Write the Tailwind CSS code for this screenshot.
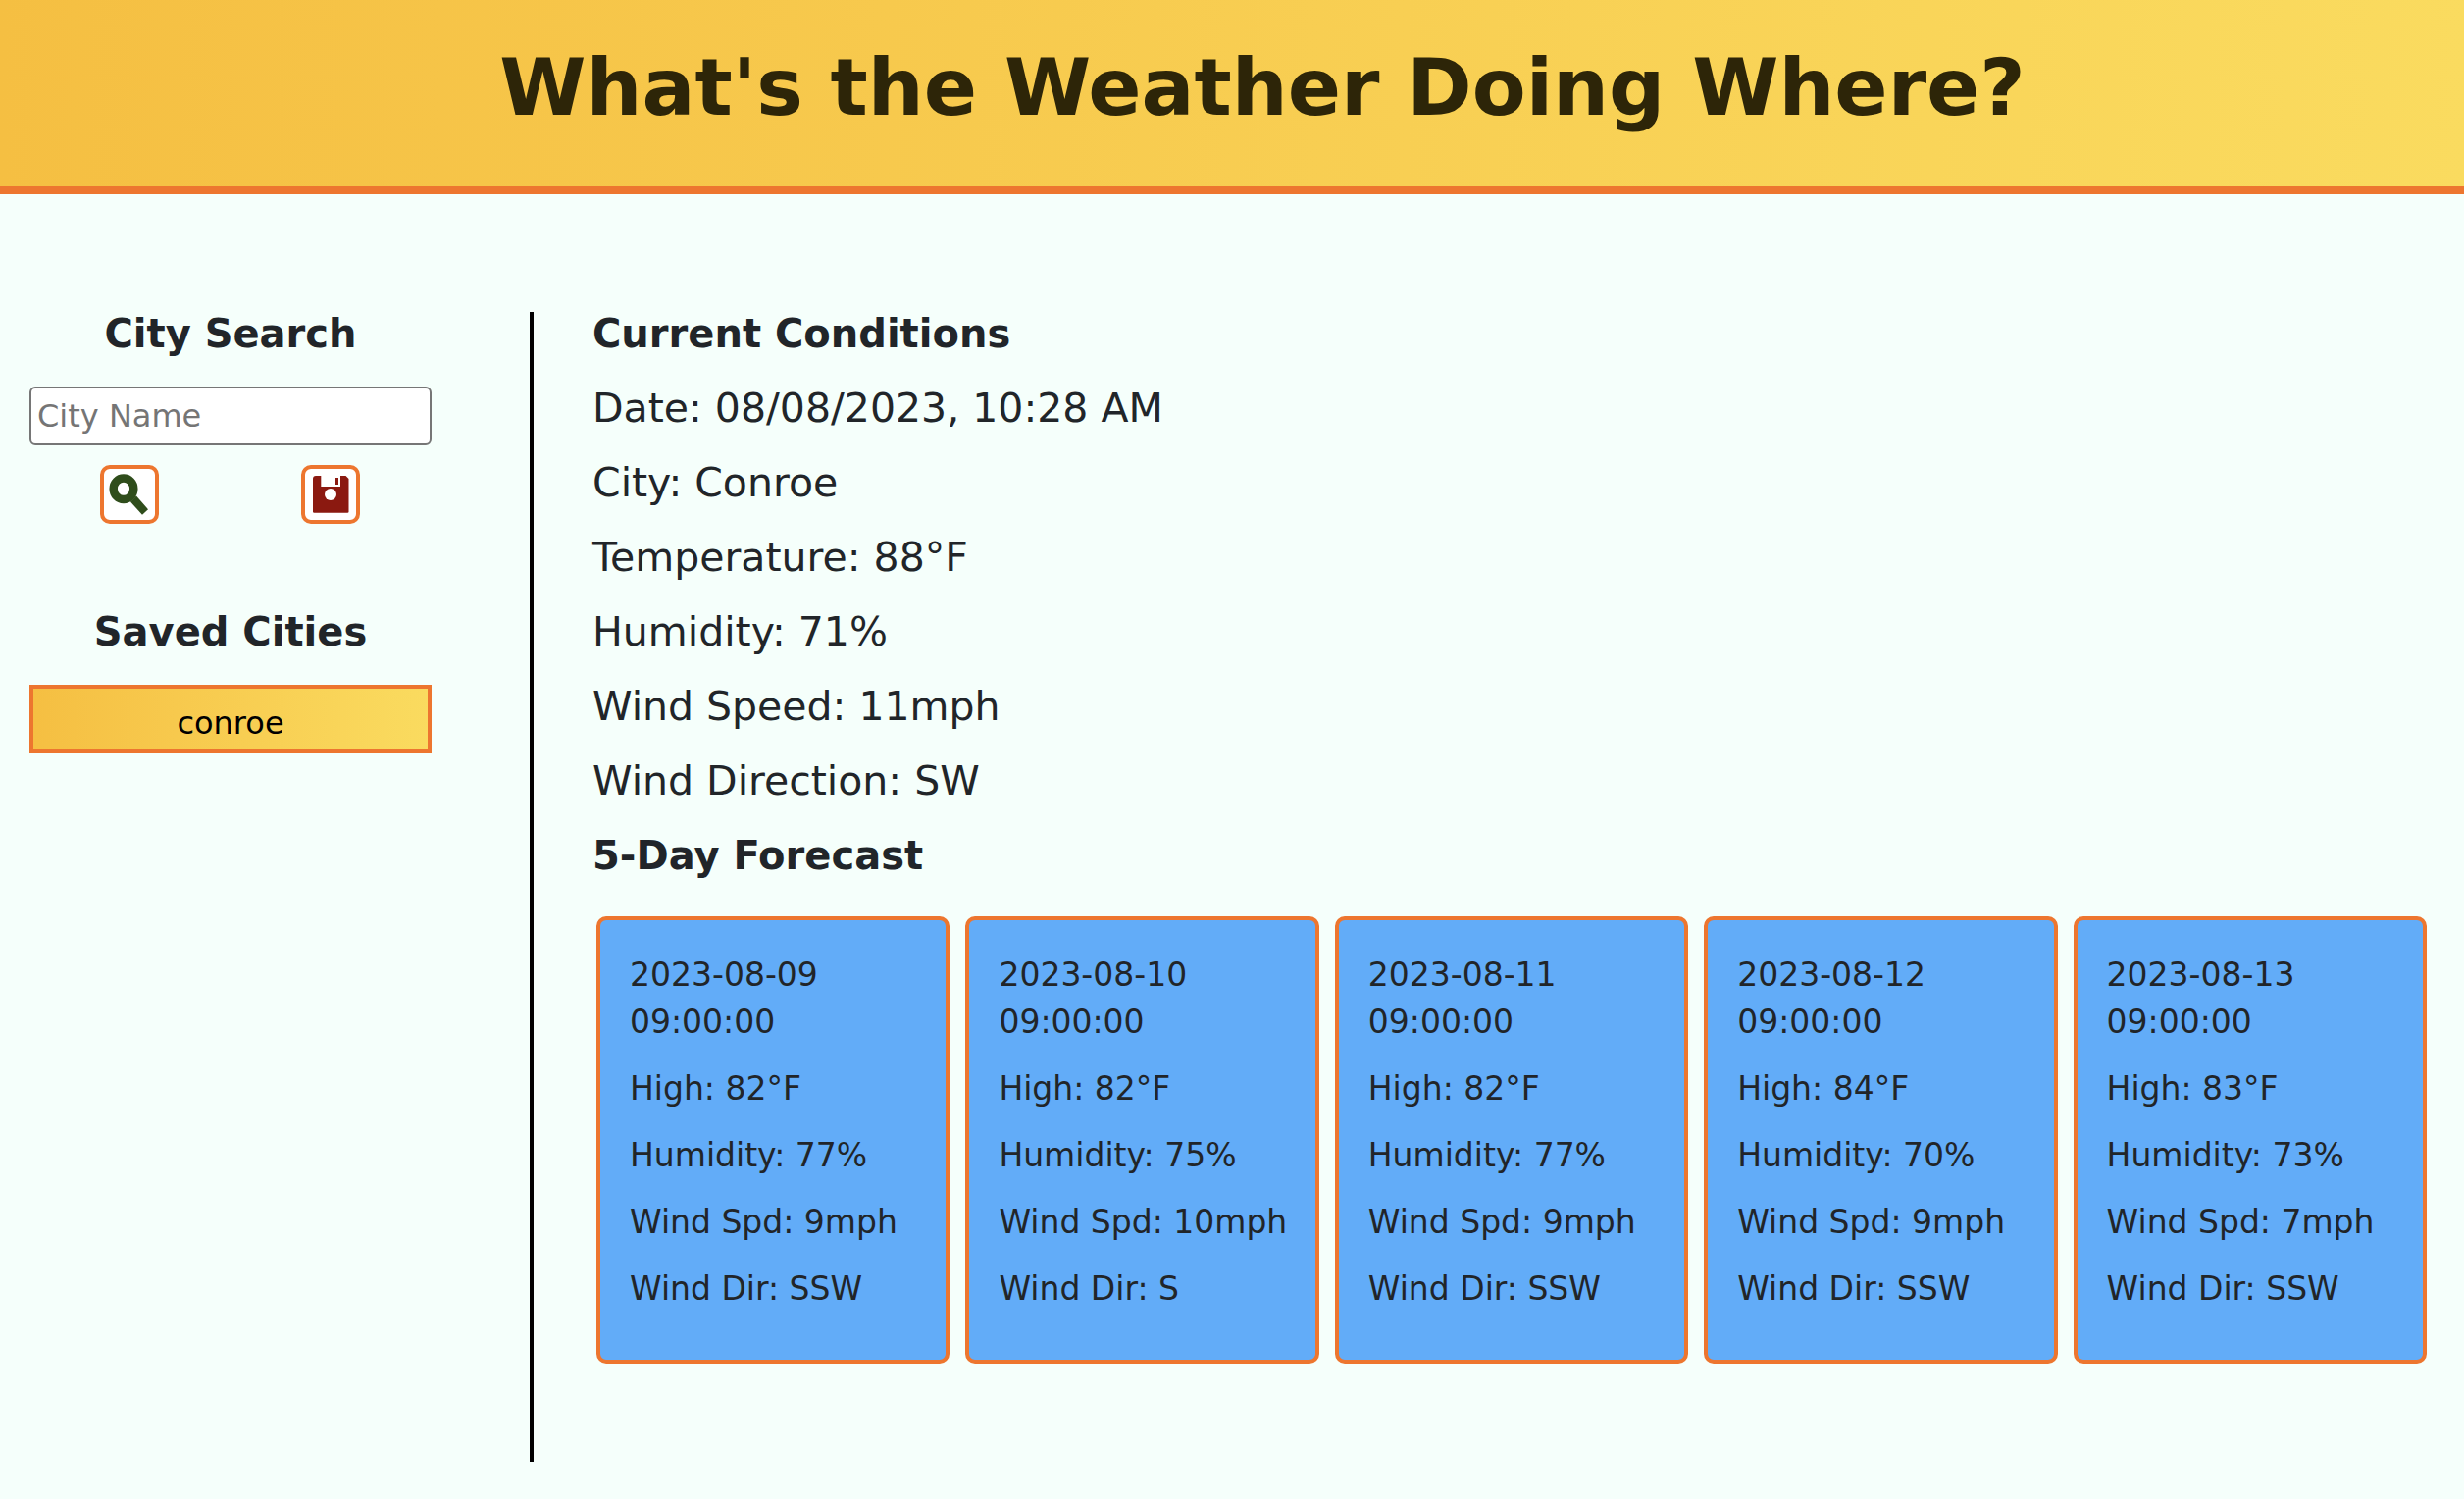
<!DOCTYPE html>
<html lang="en">
<head>
<meta charset="utf-8">
<meta name="viewport" content="width=device-width, initial-scale=1">
<title>What's the Weather Doing Where?</title>
<script src="https://cdn.jsdelivr.net/npm/@tailwindcss/browser@4"></script>
</head>
<body class="min-h-screen bg-[#f5fffb] font-['Verdana','DejaVu_Sans',sans-serif] text-[#212529]">
<header class="flex justify-center border-b-8 border-[#ed762f] bg-linear-to-r from-[#f5bf42] to-[#fadb5f] pt-[30px] pb-10 pl-[62px]">
  <h1 class="text-[80px] leading-[120px] font-bold text-[#2d2508]">What's the Weather Doing Where?</h1>
</header>
<main class="flex pt-[120px] pb-[38px]">
  <aside class="w-[544px] shrink-0 border-r-4 border-black pr-[100px] pl-[30px]">
    <form onsubmit="return false">
      <h2 class="-mt-2 text-center text-[40px] leading-[60px] font-bold"><label for="city">City Search</label></h2>
      <input id="city" type="text" placeholder="City Name" class="mt-6 block h-15 w-full rounded-md border-2 border-[#767676] bg-white px-1.5 text-[32px] placeholder:text-[#757575]">
      <div class="mt-5 flex justify-around pr-px">
        <button type="submit" aria-label="Search" class="size-15 rounded-[10px] border-4 border-[#ed762f] bg-white">
          <svg viewBox="0 0 52 52" class="size-full"><ellipse cx="20" cy="20.300" rx="10.300" ry="10.800" fill="none" stroke="#2f4d1b" stroke-width="8.500"/><path d="M27 33.500L33 27.500L45 41.300L39 46.700Z" fill="#2f4d1b"/></svg>
        </button>
        <button type="button" aria-label="Save city" class="size-15 rounded-[10px] border-4 border-[#ed762f] bg-white">
          <svg viewBox="0 0 52 52" class="size-full"><path d="M11 7H41.500L44.500 10V43.500Q44.500 44.700 43.300 44.700H9.200Q8 44.700 8 43.500V10Q8 7 11 7Z" fill="#8b1910"/><path d="M16.300 7H36V18H16.300Z" fill="#fff"/><path d="M31 9H34V16H31Z" fill="#8b1910"/><circle cx="26" cy="26" r="6" fill="#fff"/></svg>
        </button>
      </div>
    </form>
    <h2 class="mt-20 text-center text-[40px] leading-[60px] font-bold">Saved Cities</h2>
    <button type="button" class="mt-6 block h-[70px] w-full border-4 border-[#ed762f] bg-linear-to-r from-[#f5bf42] to-[#fadb5f] pt-2 text-[32px] text-black">conroe</button>
  </aside>
  <div class="min-w-0 flex-1 pr-[34px] pb-[100px] pl-15">
    <section class="-mt-2 flex flex-col gap-4 text-[41px] leading-[60px]">
      <h2 class="text-[40px] leading-[60px] font-bold">Current Conditions</h2>
      <p>Date: 08/08/2023, 10:28 AM</p>
      <p>City: Conroe</p>
      <p>Temperature: 88°F</p>
      <p>Humidity: 71%</p>
      <p>Wind Speed: 11mph</p>
      <p>Wind Direction: SW</p>
      <h2 class="text-[40px] leading-[60px] font-bold">5-Day Forecast</h2>
    </section>
    <section class="mt-8 grid grid-cols-5 gap-4 px-1 text-[33px] leading-[48px]">
      <article class="flex flex-col gap-5 rounded-[10px] border-4 border-[#ed762f] bg-[#62acf8] px-[30px] pt-8 pb-12">
        <p>2023-08-09<br>09:00:00</p><p>High: 82°F</p><p>Humidity: 77%</p><p class="whitespace-nowrap">Wind Spd: 9mph</p><p>Wind Dir: SSW</p>
      </article>
      <article class="flex flex-col gap-5 rounded-[10px] border-4 border-[#ed762f] bg-[#62acf8] px-[30px] pt-8 pb-12">
        <p>2023-08-10<br>09:00:00</p><p>High: 82°F</p><p>Humidity: 75%</p><p class="whitespace-nowrap">Wind Spd: 10mph</p><p>Wind Dir: S</p>
      </article>
      <article class="flex flex-col gap-5 rounded-[10px] border-4 border-[#ed762f] bg-[#62acf8] px-[30px] pt-8 pb-12">
        <p>2023-08-11<br>09:00:00</p><p>High: 82°F</p><p>Humidity: 77%</p><p class="whitespace-nowrap">Wind Spd: 9mph</p><p>Wind Dir: SSW</p>
      </article>
      <article class="flex flex-col gap-5 rounded-[10px] border-4 border-[#ed762f] bg-[#62acf8] px-[30px] pt-8 pb-12">
        <p>2023-08-12<br>09:00:00</p><p>High: 84°F</p><p>Humidity: 70%</p><p class="whitespace-nowrap">Wind Spd: 9mph</p><p>Wind Dir: SSW</p>
      </article>
      <article class="flex flex-col gap-5 rounded-[10px] border-4 border-[#ed762f] bg-[#62acf8] px-[30px] pt-8 pb-12">
        <p>2023-08-13<br>09:00:00</p><p>High: 83°F</p><p>Humidity: 73%</p><p class="whitespace-nowrap">Wind Spd: 7mph</p><p>Wind Dir: SSW</p>
      </article>
    </section>
  </div>
</main>
</body>
</html>
